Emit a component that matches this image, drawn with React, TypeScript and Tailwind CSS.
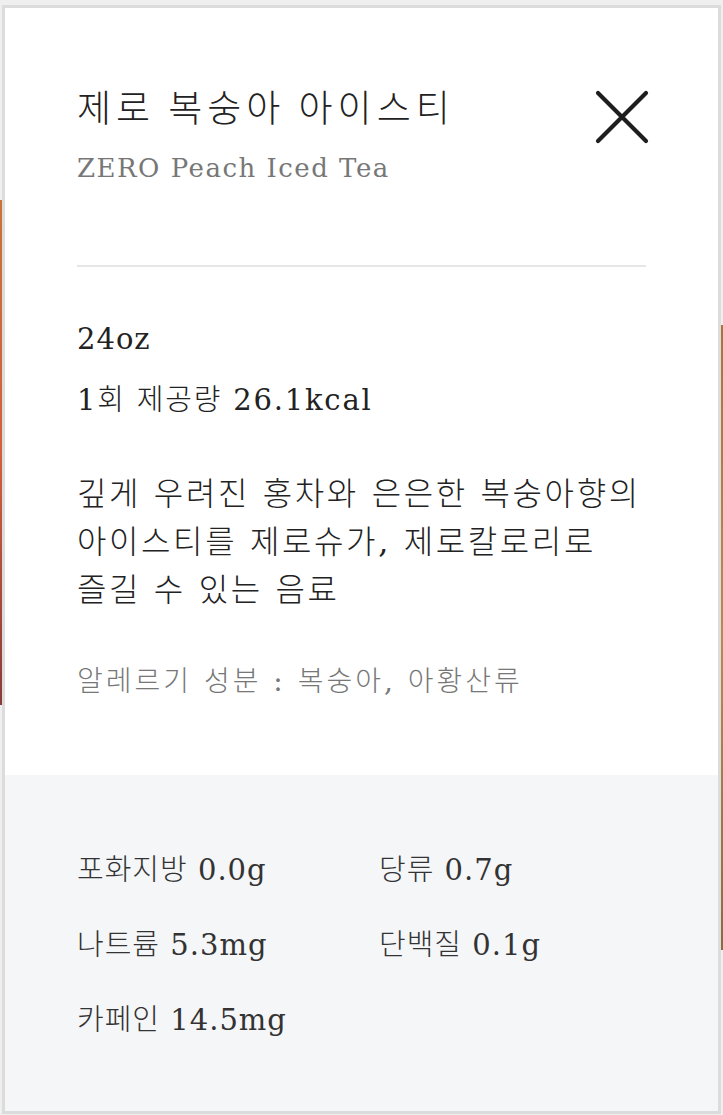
import React from "react";

const serif = { fontFamily: '"DejaVu Serif", "Noto Sans CJK KR", serif' };
const kr = { fontFamily: '"Noto Sans CJK KR", "DejaVu Serif", sans-serif' };

const nutrition = [
  { label: "포화지방", value: "0.0g" },
  { label: "당류", value: "0.7g" },
  { label: "나트륨", value: "5.3mg" },
  { label: "단백질", value: "0.1g" },
  { label: "카페인", value: "14.5mg" },
];

const Backdrop: React.FC = () => (
  <div className="flex h-[1115px] w-[723px] justify-between bg-[#efefef]">
    <div className="flex w-[300px] flex-col pt-[200px]">
      <div className="h-[505px] w-full bg-gradient-to-b from-[#c8733a] via-[#d2603c] to-[#8a3b3a]" />
    </div>
    <div className="flex w-[300px] flex-col items-end pt-[325px]">
      <div className="h-[625px] w-full bg-gradient-to-b from-[#a8743c] via-[#b98a4e] to-[#8c6a40]" />
    </div>
  </div>
);

const CloseIcon: React.FC = () => (
  <svg width="54" height="54" viewBox="0 0 54 54" fill="none">
    <path d="M3 3 L51 51 M51 3 L3 51" stroke="#1e1e1e" strokeWidth="4.2" strokeLinecap="round" />
  </svg>
);

const ProductModal: React.FC = () => {
  return (
    <div className="absolute left-[2px] top-[5px] flex h-[1109px] w-[719px] flex-col border-[3px] border-[#dcdcdc] bg-white">
      <div className="flex flex-col px-[72px] pb-[74px] pt-[74px]">
        <div className="flex items-start justify-between">
          <div className="flex flex-col">
            <h1 className="text-[37px] font-light leading-[48px] tracking-[5px] text-[#222]" style={kr}>
              제로 복숭아 아이스티
            </h1>
            <p className="mt-[20px] text-[26px] leading-[36px] tracking-[1.5px] text-[#777]" style={serif}>
              ZERO Peach Iced Tea
            </p>
          </div>
          <button className="mr-[-3px] mt-[8px]">
            <CloseIcon />
          </button>
        </div>

        <div className="mt-[79px] h-[2px] w-full bg-[#e6e6e6]" />

        <p className="mt-[52px] text-[29px] leading-[40px] tracking-[1px] text-[#222]" style={serif}>
          24oz
        </p>
        <p className="mt-[21px] text-[29px] font-light leading-[40px] tracking-[1.8px] text-[#222]" style={serif}>
          1회 제공량 26.1kcal
        </p>

        <p className="mt-[50px] whitespace-nowrap text-[32px] font-light leading-[48px] tracking-[2.6px] text-[#222]" style={serif}>
          깊게 우려진 홍차와 은은한 복숭아향의
          <br />
          아이스티를 제로슈가, 제로칼로리로
          <br />
          즐길 수 있는 음료
        </p>

        <p className="mt-[49px] text-[28px] font-light leading-[38px] tracking-[3px] text-[#777]" style={serif}>
          알레르기 성분 : 복숭아, 아황산류
        </p>
      </div>

      <div className="flex-1 bg-[#f5f6f8] px-[72px] pt-[75px]">
        <div className="grid grid-cols-[302px_1fr] gap-y-[35px]">
          {nutrition.map((n) => (
            <p key={n.label} className="text-[29px] font-light leading-[40px] tracking-[1px] text-[#333]" style={serif}>
              {n.label} {n.value}
            </p>
          ))}
        </div>
      </div>
    </div>
  );
};

const App: React.FC = () => {
  return (
    <div className="relative h-[1115px] w-[723px] overflow-hidden">
      <Backdrop />
      <ProductModal />
    </div>
  );
};

export default App;
